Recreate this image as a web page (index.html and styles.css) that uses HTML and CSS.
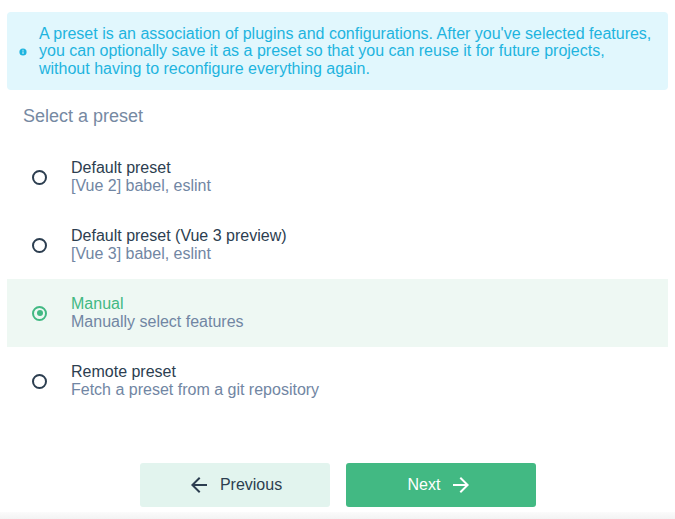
FILE: index.html
```html
<!DOCTYPE html>
<html>
<head>
<meta charset="utf-8">
<link rel="stylesheet" href="styles.css">
</head>
<body>
<div class="page">
  <div class="info">
    <svg class="info-icon" viewBox="0 0 8 8" width="8" height="8"><circle cx="4" cy="4" r="3.6" fill="#1eb4df"/><rect x="3.5" y="3.4" width="1" height="2.6" fill="#e1f7fd"/><rect x="3.5" y="1.8" width="1" height="1" fill="#e1f7fd"/></svg>
    <div class="info-text">A preset is an association of plugins and configurations. After you've selected features, you can optionally save it as a preset so that you can reuse it for future projects, without having to reconfigure everything again.</div>
  </div>
  <div class="heading">Select a preset</div>
  <div class="list">
    <div class="row">
      <span class="radio"></span>
      <div class="texts"><div class="title">Default preset</div><div class="sub">[Vue 2] babel, eslint</div></div>
    </div>
    <div class="row">
      <span class="radio"></span>
      <div class="texts"><div class="title">Default preset (Vue 3 preview)</div><div class="sub">[Vue 3] babel, eslint</div></div>
    </div>
    <div class="row selected">
      <span class="radio"></span>
      <div class="texts"><div class="title">Manual</div><div class="sub">Manually select features</div></div>
    </div>
    <div class="row">
      <span class="radio"></span>
      <div class="texts"><div class="title">Remote preset</div><div class="sub">Fetch a preset from a git repository</div></div>
    </div>
  </div>
  <div class="actions">
    <button class="btn prev"><svg viewBox="0 0 24 24" width="24" height="24"><path d="M20 11H7.83l5.59-5.59L12 4l-8 8 8 8 1.41-1.41L7.83 13H20v-2z" fill="#2c3e50"/></svg><span>Previous</span></button>
    <button class="btn next"><span>Next</span><svg viewBox="0 0 24 24" width="24" height="24"><path d="M12 4l-1.41 1.41L16.17 11H4v2h12.17l-5.58 5.59L12 20l8-8z" fill="#fff"/></svg></button>
  </div>
  <div class="band"></div>
</div>
</body>
</html>
```

FILE: styles.css
```css
* { box-sizing: border-box; }
html, body { margin: 0; padding: 0; background: #fff; }
body { font-family: "Liberation Sans", Arial, sans-serif; font-size: 16px; color: #2c3e50; }
.page { width: 675px; height: 519px; display: flex; flex-direction: column; overflow: hidden; }
.info {
  margin: 12px 7px 0 7px;
  height: 78px;
  background: #e1f7fd;
  border-radius: 4px;
  display: flex;
  align-items: center;
  padding: 0 10px 0 12px;
  color: #1eb4df;
}
.info-icon { flex: none; width: 8px; height: 8px; margin-right: 12px; margin-top: 1px; }
.info-text { line-height: 17.5px; }
.heading { margin: 15px 0 0 23px; font-size: 18px; line-height: 22px; color: #7689a2; }
.list { margin-top: 16px; }
.row { height: 68px; margin: 0 7px; display: flex; align-items: center; }
.row.selected { background: #eef8f3; }
.radio {
  flex: none;
  width: 15px; height: 15px;
  border: 2px solid #2c3e50;
  border-radius: 50%;
  margin-left: 25px;
  margin-right: 24px;
  position: relative;
}
.selected .radio { border-color: #42b983; }
.selected .radio::after {
  content: "";
  position: absolute;
  left: 2.5px; top: 2.5px;
  width: 6px; height: 6px;
  border-radius: 50%;
  background: #42b983;
}
.texts { line-height: 18px; }
.title { color: #2c3e50; }
.selected .title { color: #42b983; }
.sub { color: #7186a3; }
.actions { margin-top: 48px; display: flex; justify-content: center; gap: 16px; }
.btn {
  width: 190px; height: 44px;
  border: none; border-radius: 3px;
  font-family: "Liberation Sans", Arial, sans-serif;
  font-size: 16px;
  display: flex; align-items: center; justify-content: center;
  padding: 0;
}
.btn svg { flex: none; }
.prev { background: #e2f4ee; color: #2c3e50; }
.prev svg { margin-right: 9px; }
.next { background: #42b983; color: #fff; }
.next svg { margin-left: 9px; }
.band { margin-top: 5px; flex: 1; background: linear-gradient(#fbfbfb, #f3f3f3); }
```
